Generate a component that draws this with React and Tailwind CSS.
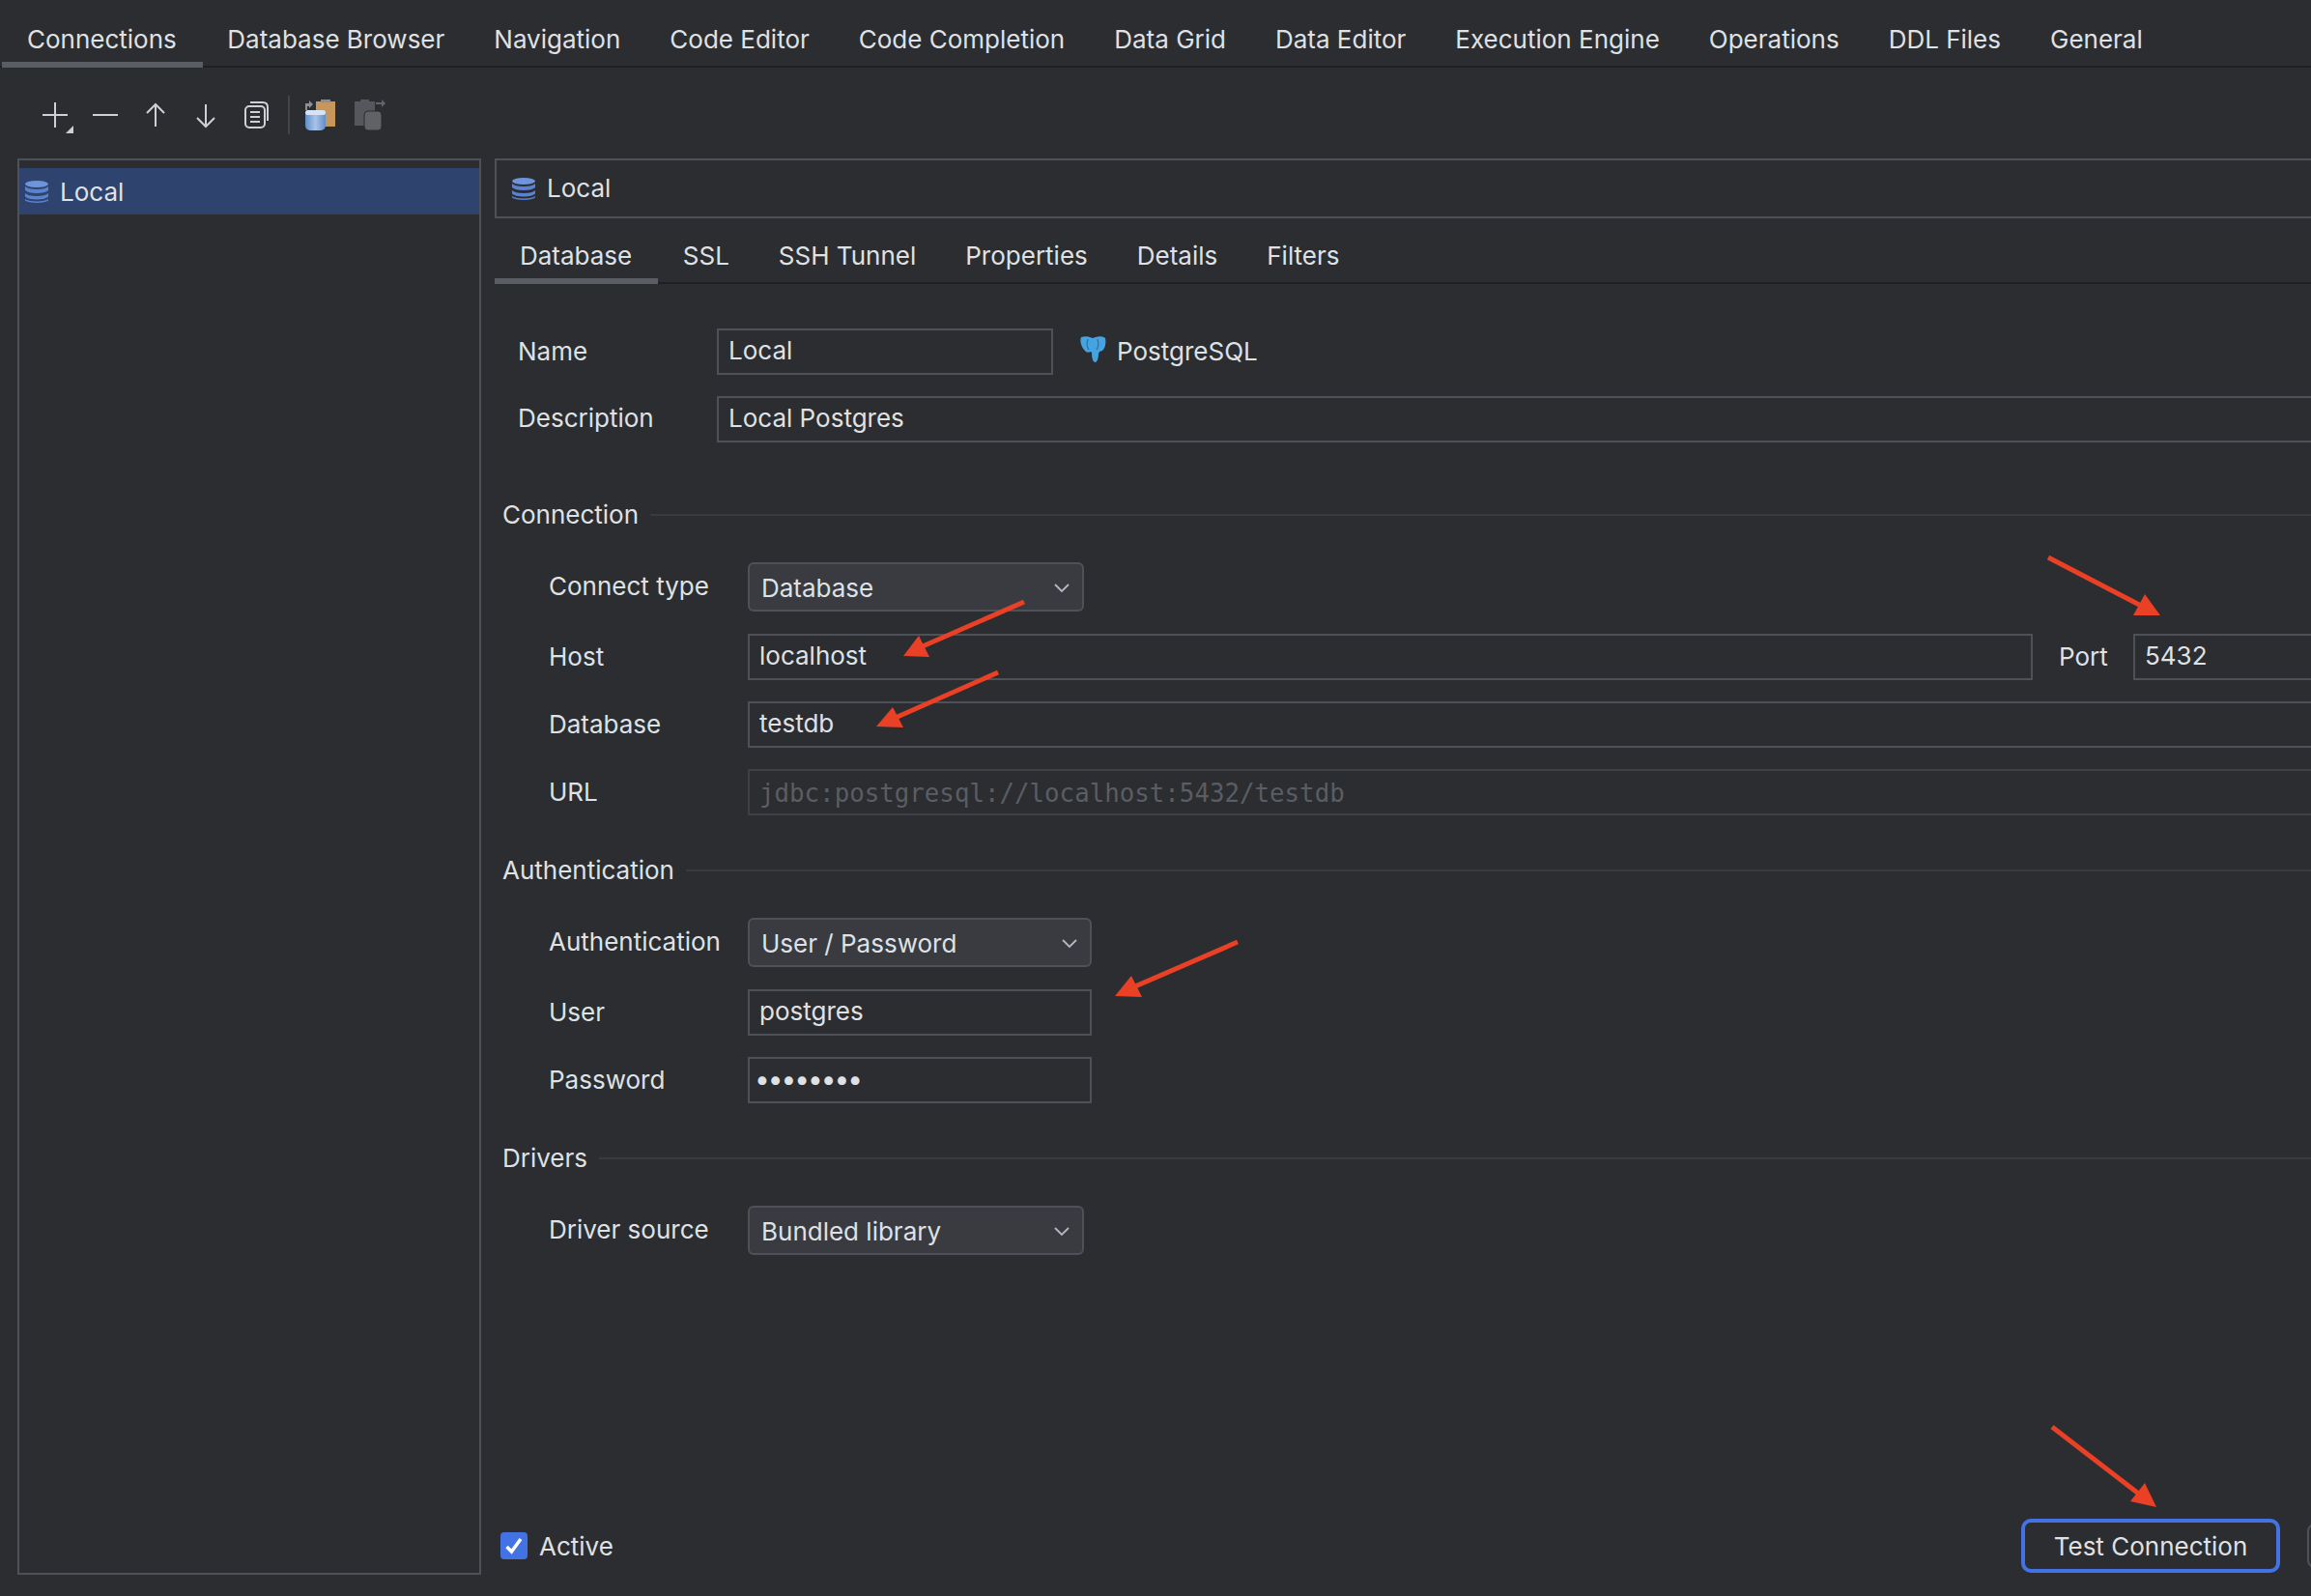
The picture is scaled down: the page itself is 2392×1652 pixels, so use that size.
const topTabs = ["Connections", "Database Browser", "Navigation", "Code Editor", "Code Completion", "Data Grid", "Data Editor", "Execution Engine", "Operations", "DDL Files", "General"];
const subTabs = ["Database", "SSL", "SSH Tunnel", "Properties", "Details", "Filters"];

function Tab({ label, active, sub }) {
  return (
    <div className={(sub ? "pt-[16px] " : "pt-[18px] ") + (active ? "flex h-full items-center border-b-[6px] border-[#5a5d63] pl-[26px] pr-[27px]" : "flex h-full items-center border-b-[6px] border-transparent px-[25.500px]")}>
      {label}
    </div>
  );
}

function DbIcon() {
  return (
    <svg width="24" height="24" viewBox="0 0 24 24" className="shrink-0" fill="#5b82cf">
      <ellipse cx="12" cy="4.5" rx="12" ry="3.5" fill="#6f94dc" />
      <path d="M0 7c2 2 6 3 12 3s10-1 12-3v4c-2 2-6 3-12 3S2 13 0 11z" />
      <path d="M0 14c2 2 6 3 12 3s10-1 12-3v3.500c-2 2-6 3-12 3s-10-1-12-3z" />
      <path d="M0 20c2 1.500 6 2.500 12 2.500s10-1 12-2.500v1.500c-2 1.500-6 2.500-12 2.500S2 23 0 21.500z" />
    </svg>
  );
}

function Elephant() {
  return (
    <svg width="28" height="28" viewBox="0 0 28 28" className="mb-[4px] shrink-0">
      <path d="M2 1c3-1 7-1 9 0l3 1 3-1c3-1 8-1 10 1 1 5 0 10-3 13l-3 1-1 2c0 4-1 8-3 9-3 0-4-5-4-10l-1-1c-2 1-5 1-6-1C3 12 0 6 2 1z" fill="#45a3e2" />
      <path d="M9 3c-1 3-1 8 1 11M19 3c1 3 1 8-1 11" stroke="#2f6f9f" strokeWidth="1.200" fill="none" />
    </svg>
  );
}

function Chevron() {
  return (
    <svg width="18" height="10" viewBox="0 0 18 10" className="mt-[2px] shrink-0" fill="none" stroke="#b4b8bf" strokeWidth="1.800">
      <path d="M2 1l7 7 7-7" />
    </svg>
  );
}

function Combo({ value, width }) {
  return (
    <div className={"flex h-[51px] items-center justify-between rounded-[6px] border-2 border-[#4e5157] bg-[#393b40] pl-[12px] pr-[6px] " + width}>
      <span className="translate-y-[1px]">{value}</span>
      <span className="mr-[6px]"><Chevron /></span>
    </div>
  );
}

function Field({ children, className }) {
  return (
    <div className={"flex h-[48px] items-center border-2 border-[#4e5157] pb-[3px] pl-[10px] " + className}>
      {children}
    </div>
  );
}

function SectionTitle({ title, className }) {
  return (
    <div className={"flex h-[30px] items-center gap-[12px] pl-[8px] " + className}>
      <span className="-translate-y-[1px]">{title}</span>
      <div className="h-[2px] flex-1 bg-[#393b40]" />
    </div>
  );
}

function Row({ label, className, children }) {
  return (
    <div className={"flex items-center pl-[56px] " + (className || "")}>
      <div className="w-[206px] shrink-0 -translate-y-[1px]">{label}</div>
      {children}
    </div>
  );
}

function Toolbar() {
  return (
    <div className="flex h-[94px] items-center pl-[41px] pt-[4px]">
      <div className="flex items-center gap-[20px]">
        <svg width="36" height="38" viewBox="0 0 36 38" className="mr-[-4px]" stroke="#ced0d6" strokeWidth="2" fill="none">
          <path d="M3 19h26M16 6v26" />
          <path d="M27 38l8-8v8z" fill="#ced0d6" stroke="none" />
        </svg>
        <svg width="32" height="32" viewBox="0 0 32 32" stroke="#ced0d6" strokeWidth="2" fill="none"><path d="M3 16h26" /></svg>
        <svg width="32" height="32" viewBox="0 0 32 32" stroke="#ced0d6" strokeWidth="2" fill="none"><path d="M16 28V5M7 14l9-9 9 9" /></svg>
        <svg width="32" height="32" viewBox="0 0 32 32" stroke="#ced0d6" strokeWidth="2" fill="none"><path d="M16 5v23M7 19l9 9 9-9" /></svg>
        <svg width="32" height="32" viewBox="0 0 32 32" stroke="#ced0d6" strokeWidth="2" fill="none">
          <rect x="5" y="7" width="20" height="22" rx="4" />
          <path d="M10 3h13c3 0 5 2 5 5v14" />
          <path d="M10 13h10M10 18h10M10 23h10" />
        </svg>
      </div>
      <div className="ml-[17px] mr-[15px] h-[40px] w-[2px] bg-[#43454a]" />
      <div className="flex items-center gap-[20px]">
        <svg width="32" height="34" viewBox="0 0 32 34" className="blur-[0.5px]">
          <defs>
            <linearGradient id="cyl" x1="0" x2="1" y1="0" y2="0">
              <stop offset="0" stopColor="#5f8ecb" />
              <stop offset="0.5" stopColor="#a8c4e6" />
              <stop offset="1" stopColor="#5f8ecb" />
            </linearGradient>
          </defs>
          <path d="M12 3h5V1h10v2h5v26H12z" fill="#c6965b" />
          <rect x="17" y="1" width="10" height="3" fill="#8b8e94" />
          <path d="M1 12V5h4V2l4 4-4 4V8H3v4z" fill="#8d9096" />
          <rect x="1" y="12" width="21" height="21" rx="5" fill="url(#cyl)" />
          <rect x="1" y="12" width="21" height="5" rx="2.500" fill="#d6e3f2" />
        </svg>
        <svg width="32" height="34" viewBox="0 0 32 34" className="blur-[0.5px]">
          <path d="M0 3h6V1h9v2h6v25H0z" fill="#55575c" />
          <rect x="10" y="13" width="18" height="20" rx="4" fill="#606266" stroke="#2b2d30" strokeWidth="1" />
          <path d="M22 4h6V1l4 4-4 4V6h-6z" fill="#62646a" />
        </svg>
      </div>
    </div>
  );
}

function Arrows() {
  const paths = [
    { line: "M2120 577L2222 630", head: "2236,637 2220,615 2208,637" },
    { line: "M2124 1477L2220 1551", head: "2232,1560 2220,1535 2205,1554" },
    { line: "M1060 623L948 672", head: "935,679 951,658 962,680" },
    { line: "M1033 696L922 745", head: "907,752 924,732 935,753" },
    { line: "M1281 975L1168 1024", head: "1154,1031 1171,1010 1182,1032" },
  ];
  return (
    <svg width="2392" height="1652" className="pointer-events-none absolute left-0 top-0">
      {paths.map((p) => (
        <g key={p.head}>
          <path d={p.line} stroke="#ea4025" strokeWidth="5" fill="none" />
          <polygon points={p.head} fill="#ea4025" />
        </g>
      ))}
    </svg>
  );
}

export default function App() {
  return (
    <div className="relative flex h-[1652px] w-[2392px] flex-col overflow-hidden bg-[#2b2d30] font-['Inter',sans-serif] text-[26px] text-[#dfe1e5]">
      <div className="flex h-[70px] shrink-0 items-stretch border-b-2 border-[#1e1f22] pl-[2px] leading-none">
        <div className="-mb-[2px] flex h-[70px]">
          {topTabs.map((t, i) => <Tab key={t} label={t} active={i === 0} />)}
        </div>
      </div>

      <Toolbar />

      <div className="flex h-[1466px] gap-[14px] pl-[18px]">
        <div className="w-[480px] shrink-0 border-2 border-[#4e5157] pt-[8px]">
          <div className="flex h-[48px] items-center gap-[12px] bg-[#2e436e] pl-[6px]">
            <DbIcon />
            <span>Local</span>
          </div>
        </div>

        <div className="flex w-[1996px] shrink-0 flex-col">
          <div className="flex h-[62px] shrink-0 items-center gap-[12px] border-2 border-[#4e5157] pl-[16px]">
            <DbIcon />
            <span className="-translate-y-[1px]">Local</span>
          </div>
          <div className="flex h-[68px] shrink-0 border-b-2 border-[#1e1f22] leading-none">
            <div className="-mb-[2px] flex h-[68px]">
              {subTabs.map((t, i) => <Tab key={t} sub label={t} active={i === 0} />)}
            </div>
          </div>

          <div className="flex flex-1 flex-col pt-[46px]">
            <div className="flex items-center pl-[24px]">
              <div className="w-[206px] shrink-0 -translate-y-[1px]">Name</div>
              <Field className="w-[348px]">Local</Field>
              <div className="ml-[27px] flex items-center gap-[11px]">
                <Elephant />
                <span className="-translate-y-[1px]">PostgreSQL</span>
              </div>
            </div>
            <div className="mt-[22px] flex items-center pl-[24px]">
              <div className="w-[206px] shrink-0 -translate-y-[2px]">Description</div>
              <Field className="flex-1">Local Postgres</Field>
            </div>

            <SectionTitle title="Connection" className="mt-[60px]" />
            <Row label="Connect type" className="mt-[34px]">
              <Combo value="Database" width="w-[348px]" />
            </Row>
            <Row label="Host" className="mt-[23px]">
              <Field className="w-[1330px]">localhost</Field>
              <div className="w-[104px] shrink-0 -translate-y-[1px] pl-[27px]">Port</div>
              <Field className="flex-1">5432</Field>
            </Row>
            <Row label="Database" className="mt-[22px]">
              <Field className="flex-1">testdb</Field>
            </Row>
            <Row label="URL" className="mt-[22px]">
              <Field className="flex-1 !border-[#3e4045] !pb-0 pt-[2px] font-['DejaVu_Sans_Mono',monospace] text-[#5a5d63] text-[25.800px]">jdbc:postgresql://localhost:5432/testdb</Field>
            </Row>

            <SectionTitle title="Authentication" className="mt-[42px]" />
            <Row label="Authentication" className="mt-[34px]">
              <Combo value="User / Password" width="w-[356px]" />
            </Row>
            <Row label="User" className="mt-[23px]">
              <Field className="w-[356px]">postgres</Field>
            </Row>
            <Row label="Password" className="mt-[22px]">
              <Field className="w-[356px] !pl-[5px] text-[28px] tracking-[-2px]">••••••••</Field>
            </Row>

            <SectionTitle title="Drivers" className="mt-[42px]" />
            <Row label="Driver source" className="mt-[34px]">
              <Combo value="Bundled library" width="w-[348px]" />
            </Row>

            <div className="mb-[2px] mt-auto flex items-center pl-[6px]">
              <div className="flex h-[28px] w-[28px] items-center justify-center rounded-[4px] bg-[#4372e4]">
                <svg width="20" height="18" viewBox="0 0 20 18" fill="none" stroke="#ffffff" strokeWidth="3.500">
                  <path d="M2.500 10l5 5 9.500-13" />
                </svg>
              </div>
              <span className="ml-[12px]">Active</span>
              <div className="ml-auto flex h-[56px] w-[268px] items-center justify-center rounded-[10px] border-4 border-[#4372e4]">Test Connection</div>
              <div className="ml-[28px] h-[46px] w-[120px] rounded-[8px] border-2 border-[#4e5157]" />
            </div>
          </div>
        </div>
      </div>

      <Arrows />
    </div>
  );
}
